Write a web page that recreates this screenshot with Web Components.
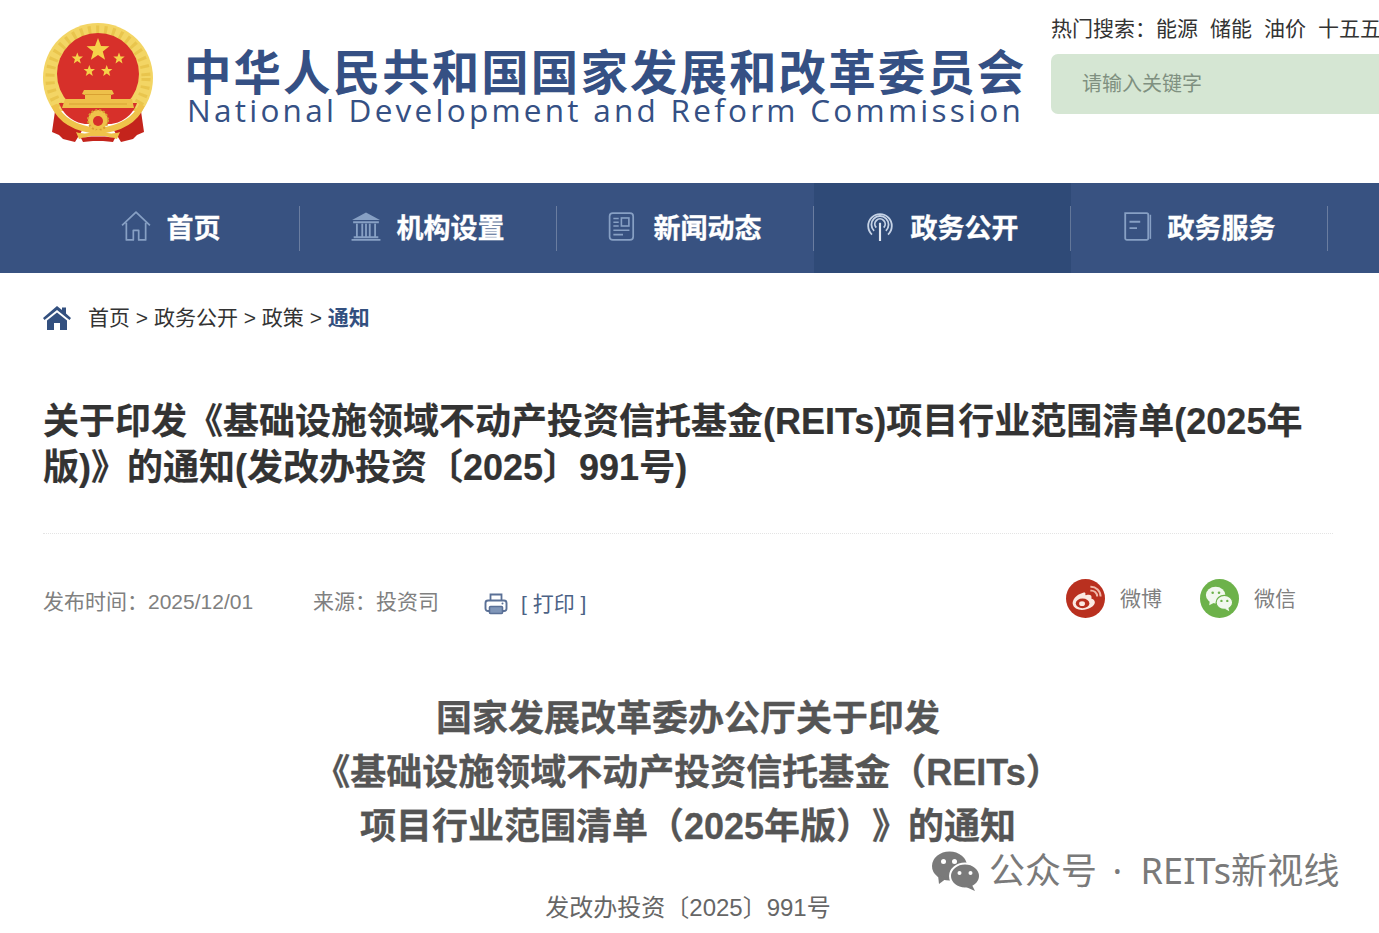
<!DOCTYPE html>
<html lang="zh">
<head>
<meta charset="utf-8">
<title>国家发展和改革委员会</title>
<style>
  html, body { margin: 0; padding: 0; background: #fff; overflow: hidden; height: 933px; }
  body { font-family: "Liberation Sans", "Noto Sans CJK SC", sans-serif; color: #333; position: relative; }
</style>
</head>
<body>
<site-header></site-header>
<nav-bar>
  <nav-item icon="home">首页</nav-item>
  <nav-item icon="bank">机构设置</nav-item>
  <nav-item icon="news">新闻动态</nav-item>
  <nav-item icon="signal" active>政务公开</nav-item>
  <nav-item icon="book">政务服务</nav-item>
</nav-bar>
<bread-crumb></bread-crumb>
<article-head>关于印发《基础设施领域不动产投资信托基金(REITs)项目行业范围清单(2025年版)》的通知(发改办投资〔2025〕991号)</article-head>
<meta-row></meta-row>
<doc-title></doc-title>
<water-mark></water-mark>

<script>
const star = (cx, cy, r) => {
  let pts = [];
  for (let i = 0; i < 10; i++) {
    const a = -Math.PI / 2 + i * Math.PI / 5;
    const q = i % 2 ? r * 0.42 : r;
    pts.push((cx + q * Math.cos(a)).toFixed(1) + ',' + (cy + q * Math.sin(a)).toFixed(1));
  }
  return `<polygon points="${pts.join(' ')}" fill="#f6d24a"/>`;
};

class SiteHeader extends HTMLElement {
  connectedCallback() {
    this.attachShadow({ mode: 'open' });
    this.shadowRoot.innerHTML = `
      <style>
        :host { display: flex; height: 183px; box-sizing: border-box; padding-left: 43px; white-space: nowrap; overflow: hidden; }
        .emblem { width: 110px; height: 120px; margin-top: 23px; flex: none; }
        .brand { width: 869px; margin-left: 31px; flex: none; color: #355084; }
        .cn { font: 700 47.5px/50px "Noto Sans CJK SC", sans-serif; letter-spacing: 2.05px; margin-top: 45px; }
        .en { font: 400 31.5px/30px "Open Sans", "Liberation Sans", sans-serif; letter-spacing: 3.25px; margin-left: 3px; }
        .side { margin-left: -2px; flex: none; width: 400px; }
        .hot { font-size: 21px; line-height: 30px; margin-top: 14px; color: #333; display: flex; gap: 12px; }
        .hot span:first-child { margin-right: -12px; }
        .search { height: 60px; margin-top: 10px; background: #d5e6d3; border-radius: 7px; padding-left: 31px; font-size: 20px; line-height: 60px; color: #7f9080; }
      </style>
      <svg class="emblem" viewBox="0 0 110 120">
        <defs><clipPath id="top"><rect width="110" height="88"/></clipPath></defs>
        <path d="M12 88 L9 109 L16 112 L20 116 L32 119 L40 106 Z" fill="#c4241c"/>
        <path d="M98 88 L101 109 L94 112 L90 116 L78 119 L70 106 Z" fill="#c4241c"/>
        <g clip-path="url(#top)">
          <circle cx="55" cy="55" r="55" fill="#f3d564"/>
          <circle cx="55" cy="55" r="48" fill="none" stroke="#e6bf46" stroke-width="9" stroke-dasharray="3 5" opacity=".75"/>
        </g>
        <circle cx="55" cy="51" r="41" fill="#d7302a"/>
        <path d="M16 80 H94 C90 92 78 101 66 101 H44 C32 101 20 92 16 80 Z" fill="#d7302a"/>
        ${star(55, 27, 12)}${star(34.3, 35.5, 6)}${star(76, 35.5, 6)}${star(46.3, 48, 6)}${star(63.7, 48, 6)}
        <path d="M41 67 H69 L71 71 L68 72 V76 H89 L91 85 H19 L22 76 H42 V72 L39 71 Z" fill="#eec04a"/>
        <path d="M42 71.5 H68 M26 81 H84" stroke="#d9a232" stroke-width="1" fill="none"/>
        <path d="M11 82 C18 98 34 106 55 108 C76 106 92 98 99 82" fill="none" stroke="#efc24a" stroke-width="6"/>
        <circle cx="55" cy="97" r="10" fill="#efc24a"/>
        <circle cx="55" cy="97" r="10" fill="none" stroke="#d99e32" stroke-width="2" stroke-dasharray="2 2"/>
        <circle cx="55" cy="98" r="5" fill="#d7302a"/>
        <path d="M33 109 C42 112 50 110 55 106 C60 110 68 112 77 109 L74 116 L62 113 H48 L36 116 Z" fill="#efc24a"/>
        <path d="M38 115 L48 113.5 H62 L72 115 L70 119 L60 118 H50 L40 119 Z" fill="#c4241c"/>
      </svg>
      <div class="brand">
        <div class="cn">中华人民共和国国家发展和改革委员会</div>
        <div class="en">National Development and Reform Commission</div>
      </div>
      <div class="side">
        <div class="hot"><span>热门搜索&#xFF1A;</span><span>能源</span><span>储能</span><span>油价</span><span>十五五</span></div>
        <div class="search">请输入关键字</div>
      </div>`;
  }
}

class NavBar extends HTMLElement {
  connectedCallback() {
    this.attachShadow({ mode: 'open' });
    this.shadowRoot.innerHTML = `
      <style>
        :host { display: flex; height: 90px; padding-left: 43px; background: #385281; }
      </style>
      <slot></slot>`;
  }
}

const navIcons = {
  home: `<path d="M2 14.5 L15 2 L28 14.5 M6 12 V28 H12.5 V19 H17.5 V28 H24 V12" fill="none" stroke="#87a0c4" stroke-width="1.6" stroke-linejoin="round"/>`,
  bank: `<path d="M2 9.5 L15 2.5 L28 9.5 Z" fill="#87a0c4"/><path d="M3 11.5 H27 M6.5 13 V25 M11.5 13 V25 M15 13 V25 M18.5 13 V25 M23.5 13 V25 M3.5 25.5 H26.5 M1.5 28 H28.5" stroke="#87a0c4" stroke-width="1.7" fill="none"/>`,
  news: `<g transform="translate(-2 0)"><rect x="4.5" y="3" width="22" height="25" rx="3" fill="none" stroke="#87a0c4" stroke-width="1.6"/><path d="M8 8 H13 M8 11.5 H13 M8 15 H13 M8 19 H23 M8 23 H17" stroke="#87a0c4" stroke-width="1.5"/><rect x="15.5" y="7.5" width="7" height="7.5" fill="none" stroke="#87a0c4" stroke-width="1.5"/></g>`,
  signal: `<g fill="none" stroke="#c6d3e6" stroke-width="1.7"><path d="M7.5 23 A11 11 0 1 1 22.5 23"/><path d="M9.5 19.5 A8 8 0 1 1 20.5 19.5"/><path d="M11.5 16.5 A4.8 4.8 0 1 1 18.5 16.5"/></g><path d="M15 12 V29" stroke="#dfe6f1" stroke-width="2"/>`,
  book: `<path d="M4 3 H24 A1.5 1.5 0 0 1 25.5 4.5 V26.5 A1.5 1.5 0 0 1 24 28 H5.5 A1.5 1.5 0 0 1 4 26.5 Z" fill="none" stroke="#87a0c4" stroke-width="1.7"/><path d="M8 11 H18 M8 17 H15" stroke="#87a0c4" stroke-width="1.7"/><path d="M27.5 4.5 V27" stroke="#87a0c4" stroke-width="1.4"/>`
};

class NavItem extends HTMLElement {
  connectedCallback() {
    this.attachShadow({ mode: 'open' });
    this.shadowRoot.innerHTML = `
      <style>
        :host { display: flex; box-sizing: border-box; width: 257px; height: 90px; padding-bottom: 4px; align-items: center; justify-content: center; gap: 14px; position: relative; color: #fff; font: 700 27px/1 "Noto Sans CJK SC", "Liberation Sans", sans-serif; -webkit-text-stroke: .3px #fff; }
        :host([active]) { background: #2f4a77; }
        :host::after { content: ""; position: absolute; right: 0; top: 23px; height: 45px; width: 1px; background: rgba(255,255,255,.25); }
        svg { width: 30px; height: 30px; flex: none; margin: 0 2px 0 -2px; }
      </style>
      <svg viewBox="1 1 28 28">${navIcons[this.getAttribute('icon')]}</svg>
      <slot></slot>`;
  }
}

class BreadCrumb extends HTMLElement {
  connectedCallback() {
    this.attachShadow({ mode: 'open' });
    this.shadowRoot.innerHTML = `
      <style>
        :host { display: flex; align-items: center; height: 30px; margin-top: 30px; padding-left: 43px; font-size: 21px; color: #333; white-space: pre; }
        svg { width: 28px; height: 26px; margin-right: 17px; flex: none; }
        span { margin-bottom: 4px; }
        b { color: #33507f; }
      </style>
      <svg viewBox="0 0 28 26"><path d="M14 1 L19 5 V2.5 H23 V8.5 L28 13 L26.5 15 L14 5 L1.5 15 L0 13 Z" fill="#33507f"/><path d="M14 7.5 L24 15.5 V25 H17 V18 H11 V25 H4 V15.5 Z" fill="#33507f"/></svg>
      <span>首页 > 政务公开 > 政策 > <b>通知</b></span>`;
  }
}

class ArticleHead extends HTMLElement {
  connectedCallback() {
    this.attachShadow({ mode: 'open' });
    this.shadowRoot.innerHTML = `
      <style>
        :host { display: block; margin: 66px 46px 0 43px; padding-bottom: 42px; border-bottom: 1px dotted #e4e4e4; font-weight: 700; font-size: 36px; line-height: 46px; color: #333; -webkit-text-stroke: .2px #333; }
      </style>
      <slot></slot>`;
  }
}

class MetaRow extends HTMLElement {
  connectedCallback() {
    this.attachShadow({ mode: 'open' });
    this.shadowRoot.innerHTML = `
      <style>
        :host { display: flex; align-items: flex-start; height: 40px; margin-top: 43px; padding-left: 43px; font-size: 21px; color: #808080; white-space: nowrap; }
        .t { line-height: 30px; margin-top: 10px; }
        .src { margin-left: 60px; }
        .print { display: flex; align-items: center; gap: 13px; margin-left: 45px; margin-top: 12px; line-height: 30px; color: #4c6285; }
        .print svg { width: 24px; height: 24px; }
        .share { display: flex; align-items: center; margin-left: auto; margin-right: 83px; }
        .share svg { width: 39px; height: 39px; margin: 2px 15px 0 0; }
        .share span { margin-bottom: 2px; }
        .share span + svg { margin-left: 38px; }
      </style>
      <span class="t">发布时间&#xFF1A;2025/12/01</span>
      <span class="t src">来源&#xFF1A;投资司</span>
      <span class="print">
        <svg viewBox="0 0 24 24"><path d="M6.5 9 V2.5 H17.5 V9" fill="none" stroke="#5a7096" stroke-width="1.8"/><rect x="1.5" y="8.5" width="21" height="10.5" rx="2.5" fill="none" stroke="#5a7096" stroke-width="1.9"/><rect x="5.5" y="14.5" width="13" height="7" rx="1" fill="#8096b8" stroke="#5a7096" stroke-width="1.6"/><circle cx="18.5" cy="11.5" r="1" fill="#5a7096"/></svg>
        <span>[ 打印 ]</span>
      </span>
      <span class="share">
        <svg viewBox="0 0 40 40"><circle cx="20" cy="20" r="20" fill="#b9301f"/><path d="M17.5 14 C10 16 6 22 7 26 C8 31 15 33 21 31 C28 29 31 25 29 22 C28 20.5 26 20.5 26 20 C27 17 25 15.5 21 16.5 C20 17 19.5 16.5 20 15.5 C20 14 19.5 13.5 17.5 14 Z" fill="#fbe9e2"/><ellipse cx="17" cy="25" rx="7" ry="5" fill="#b9301f"/><ellipse cx="16.5" cy="25.3" rx="3" ry="2.5" fill="#fbe9e2"/><path d="M25 12 A6 6 0 0 1 32 18 M25 8 A10 10 0 0 1 35.5 18" fill="none" stroke="#f0b7a8" stroke-width="2"/></svg>
        <span>微博</span>
        <svg viewBox="0 0 40 40"><circle cx="20" cy="20" r="20" fill="#6db24a"/><ellipse cx="16" cy="16.5" rx="10" ry="8.5" fill="#f2f8ee"/><path d="M10 22 L9.5 27 L15 24 Z" fill="#f2f8ee"/><ellipse cx="25" cy="24" rx="8.5" ry="7.2" fill="#f2f8ee" stroke="#6db24a" stroke-width="1.2"/><path d="M29 29 L30 33 L25.5 30.5 Z" fill="#f2f8ee"/><circle cx="13" cy="14" r="1.3" fill="#6db24a"/><circle cx="19.5" cy="14" r="1.3" fill="#6db24a"/><circle cx="22" cy="22.5" r="1.2" fill="#6db24a"/><circle cx="28" cy="22.5" r="1.2" fill="#6db24a"/></svg>
        <span>微信</span>
      </span>`;
  }
}

class DocTitle extends HTMLElement {
  connectedCallback() {
    this.attachShadow({ mode: 'open' });
    this.shadowRoot.innerHTML = `
      <style>
        :host { display: block; margin-top: 75px; width: 1376px; text-align: center; color: #555; }
        h1 { margin: 0; font-size: 36px; line-height: 54px; font-weight: 700; -webkit-text-stroke: .3px #555; text-spacing-trim: space-all; }
        p { margin: 37px 0 0; font-size: 24px; line-height: 34px; color: #666; }
      </style>
      <h1>国家发展改革委办公厅关于印发<br>《基础设施领域不动产投资信托基金&#xFF08;REITs&#xFF09;<br>项目行业范围清单&#xFF08;2025年版&#xFF09;》的通知</h1>
      <p>发改办投资〔2025〕991号</p>`;
  }
}

class WaterMark extends HTMLElement {
  connectedCallback() {
    this.attachShadow({ mode: 'open' });
    this.shadowRoot.innerHTML = `
      <style>
        :host { position: absolute; left: 932px; top: 848px; display: flex; align-items: center; gap: 9px; color: #7a7a7a; font: 400 36px/46px "Noto Sans", "Noto Sans CJK SC", sans-serif; white-space: pre; }
        svg { width: 48px; height: 40px; flex: none; }
        i { font-style: normal; margin: 0 9px 0 6px; }
        em { font-style: normal; letter-spacing: .2px; }
      </style>
      <svg viewBox="0 0 48 40"><ellipse cx="17.5" cy="15" rx="17.5" ry="14.5" fill="#7a7a7a"/><path d="M6 24 L7 33 L15 27 Z" fill="#7a7a7a"/><ellipse cx="33" cy="25" rx="15" ry="12.5" fill="#7a7a7a" stroke="#fff" stroke-width="2"/><path d="M40 34 L43 40 L34 36 Z" fill="#7a7a7a"/><circle cx="11.5" cy="10.5" r="2.5" fill="#fff"/><circle cx="22.5" cy="10.5" r="2.5" fill="#fff"/><circle cx="27.5" cy="22" r="2" fill="#fff"/><circle cx="38.5" cy="22" r="2" fill="#fff"/></svg>
      <span>公众号<i> · </i><em>REITs新视线</em></span>`;
  }
}

customElements.define('site-header', SiteHeader);
customElements.define('nav-bar', NavBar);
customElements.define('nav-item', NavItem);
customElements.define('bread-crumb', BreadCrumb);
customElements.define('article-head', ArticleHead);
customElements.define('meta-row', MetaRow);
customElements.define('doc-title', DocTitle);
customElements.define('water-mark', WaterMark);
</script>
</body>
</html>
